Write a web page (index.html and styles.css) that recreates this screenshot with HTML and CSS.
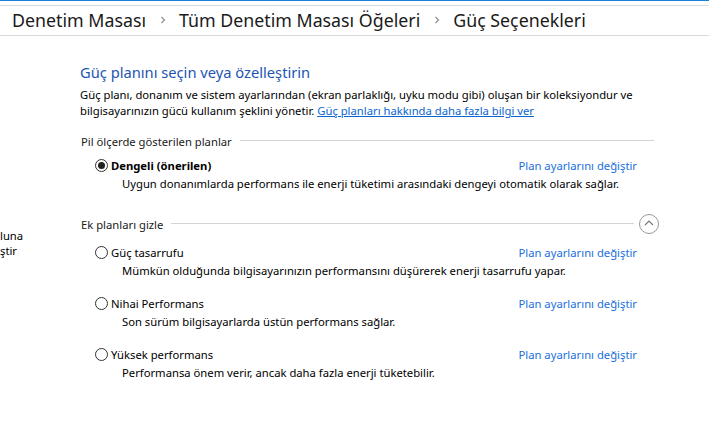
FILE: index.html
```html
<!DOCTYPE html>
<html lang="tr">
<head>
<meta charset="utf-8">
<title>Güç Seçenekleri</title>
<link rel="stylesheet" href="styles.css">
</head>
<body>
<header class="top">
  <nav class="crumbs">
    <span class="crumb">Denetim Masası</span>
    <svg class="sep" width="6" height="8" viewBox="0 0 6 8"><polyline points="1.5,1 4.5,4 1.5,7" fill="none" stroke="#8a8a8a" stroke-width="1.1"/></svg>
    <span class="crumb">Tüm Denetim Masası Öğeleri</span>
    <svg class="sep" width="6" height="8" viewBox="0 0 6 8"><polyline points="1.5,1 4.5,4 1.5,7" fill="none" stroke="#8a8a8a" stroke-width="1.1"/></svg>
    <span class="crumb">Güç Seçenekleri</span>
  </nav>
</header>
<div class="main">
  <aside class="side">
    <p>luna</p>
    <p>ştir</p>
  </aside>
  <section class="content">
    <h1 class="title">Güç planını seçin veya özelleştirin</h1>
    <p class="intro"><span class="line">Güç planı, donanım ve sistem ayarlarından (ekran parlaklığı, uyku modu gibi) oluşan bir koleksiyondur ve</span><br><span class="line">bilgisayarınızın gücü kullanım şeklini yönetir.</span> <a href="#" class="link">Güç planları hakkında daha fazla bilgi ver</a></p>

    <div class="group-head">
      <span class="group-label">Pil ölçerde gösterilen planlar</span>
      <span class="rule"></span>
    </div>
    <div class="plan first">
      <div class="plan-row">
        <span class="choice"><span class="radio checked"></span><b class="name">Dengeli (önerilen)</b></span>
        <a href="#" class="plan-link">Plan ayarlarını değiştir</a>
      </div>
      <p class="desc">Uygun donanımlarda performans ile enerji tüketimi arasındaki dengeyi otomatik olarak sağlar.</p>
    </div>

    <div class="group-head extra">
      <span class="group-label">Ek planları gizle</span>
      <span class="rule"></span>
      <span class="collapse"><svg width="10" height="6" viewBox="0 0 10 6"><polyline points="1,5 5,1 9,5" fill="none" stroke="#7a7a7a" stroke-width="1.2"/></svg></span>
    </div>
    <div class="plan second">
      <div class="plan-row">
        <span class="choice"><span class="radio"></span><span class="name">Güç tasarrufu</span></span>
        <a href="#" class="plan-link">Plan ayarlarını değiştir</a>
      </div>
      <p class="desc">Mümkün olduğunda bilgisayarınızın performansını düşürerek enerji tasarrufu yapar.</p>
    </div>
    <div class="plan">
      <div class="plan-row">
        <span class="choice"><span class="radio"></span><span class="name">Nihai Performans</span></span>
        <a href="#" class="plan-link">Plan ayarlarını değiştir</a>
      </div>
      <p class="desc">Son sürüm bilgisayarlarda üstün performans sağlar.</p>
    </div>
    <div class="plan">
      <div class="plan-row">
        <span class="choice"><span class="radio"></span><span class="name">Yüksek performans</span></span>
        <a href="#" class="plan-link">Plan ayarlarını değiştir</a>
      </div>
      <p class="desc">Performansa önem verir, ancak daha fazla enerji tüketebilir.</p>
    </div>
  </section>
</div>
</body>
</html>
```
FILE: styles.css
```css
* { box-sizing: border-box; }
html, body { margin: 0; padding: 0; background: #fff; }
body {
  font-family: "Noto Sans", "Open Sans", sans-serif;
  font-size: 11.25px;
  color: #000;
  width: 709px;
  height: 423px;
  overflow: hidden;
}
p { margin: 0; }

/* header / breadcrumb */
.top {
  border-top: 1px solid #1c7fd6;
  padding-top: 4px;
}
.crumbs {
  display: flex;
  align-items: center;
  height: 31px;
  padding-left: 12px;
  border-top: 1px solid #dadada;
  border-bottom: 1px solid #dadada;
  font-size: 17.8px;
  color: #1a1a1a;
  line-height: 29px;
  white-space: nowrap;
}
.sep { margin: 0 13px 0 14px; position: relative; top: -1px; }

/* layout */
.main { display: flex; }
.side {
  width: 80px;
  flex: none;
  padding-top: 192px;
  line-height: 15px;
  color: #000;
  overflow: hidden;
  white-space: nowrap;
}
.content { width: 579px; flex: none; }

.title {
  margin: 26px 0 0;
  font-size: 14.7px;
  font-weight: normal;
  line-height: 20px;
  color: #1d55b3;
}
.intro {
  margin-top: 5px;
  line-height: 16px;
  white-space: nowrap;
}
.link { color: #0b65cf; text-decoration: underline; }

.group-head {
  display: flex;
  align-items: center;
  margin-top: 14px;
  height: 16px;
  padding-left: 1px;
  padding-right: 5px;
  color: #1a1a1a;
}
.group-label { white-space: nowrap; }
.rule {
  flex: 1;
  height: 1px;
  background: #d4d4d4;
  margin-left: 8px;
  position: relative;
  top: -1px;
}
.group-head.extra {
  margin-top: 22px;
  height: 20px;
  padding-right: 0;
}
.group-head.extra .rule { margin-right: 5px; }
.collapse {
  width: 20px;
  height: 20px;
  border: 1px solid #9a9a9a;
  border-radius: 50%;
  display: flex;
  align-items: center;
  justify-content: center;
  padding-bottom: 2px;
}

.plan { margin-top: 16px; padding-left: 15px; padding-right: 22px; }
.plan.first { margin-top: 8px; }
.plan.second { margin-top: 10px; }
.plan-row {
  display: flex;
  align-items: center;
  justify-content: space-between;
  height: 16px;
}
.choice { display: flex; align-items: center; }
.radio {
  width: 13px;
  height: 13px;
  border: 1px solid #333;
  border-radius: 50%;
  margin-right: 3px;
  display: flex;
  align-items: center;
  justify-content: center;
  background: #fff;
}
.radio.checked::after {
  content: "";
  width: 7px;
  height: 7px;
  border-radius: 50%;
  background: #222;
}
.name { font-weight: normal; color: #000; }
b.name { font-weight: bold; }
.plan-link { color: #1a6fdc; text-decoration: none; }
.desc {
  margin-top: 3px;
  padding-left: 27px;
  line-height: 16px;
  white-space: nowrap;
}
```
